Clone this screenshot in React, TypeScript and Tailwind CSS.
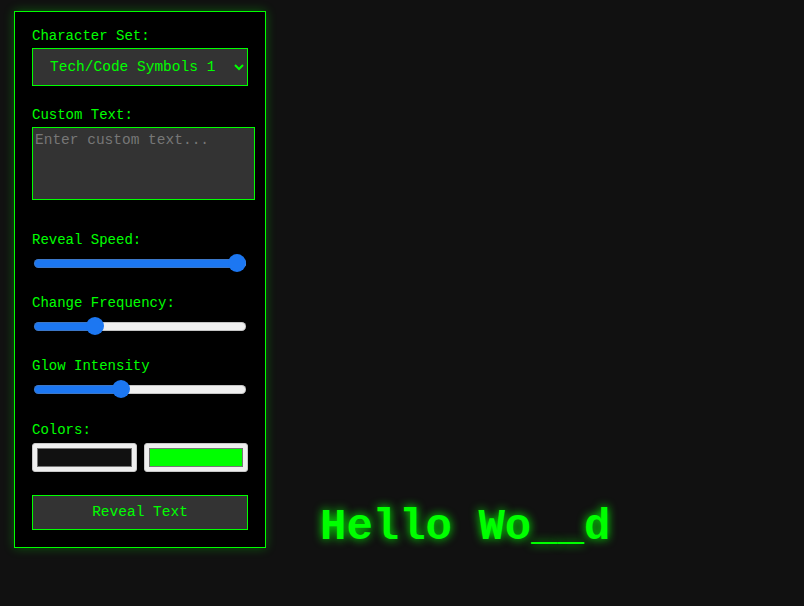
import { useState } from "react";
import type { CSSProperties } from "react";

const mono = "font-['Liberation_Mono','Courier_New',monospace]";

const Slider = ({ label, value, last }: { label: string; value: number; last?: boolean }) => {
  const [v, setV] = useState(value);
  // fill ends under the thumb centre
  const fill = { "--p": `calc(9px + (100% - 18px) * ${v / 100})` } as CSSProperties;
  return (
    <div className={last ? "mb-[23px]" : "mb-[22px]"}>
      <label className="mb-[5px] block text-[14px] leading-[16px] text-[#0f0]">{label}</label>
      <div className="px-[2px]">
        <input
          type="range"
          min={0}
          max={100}
          value={v}
          style={fill}
          onChange={(e) => setV(Number(e.target.value))}
          className="block h-[20px] w-full cursor-pointer appearance-none bg-transparent [&::-webkit-slider-runnable-track]:h-[9px] [&::-webkit-slider-runnable-track]:rounded-full [&::-webkit-slider-runnable-track]:bg-[linear-gradient(to_right,#1c77f2_var(--p),#efefef_var(--p))] [&::-webkit-slider-runnable-track]:shadow-[inset_0_0_0_1px_rgba(120,120,120,0.35)] [&::-webkit-slider-thumb]:mt-[-4.5px] [&::-webkit-slider-thumb]:h-[18px] [&::-webkit-slider-thumb]:w-[18px] [&::-webkit-slider-thumb]:appearance-none [&::-webkit-slider-thumb]:rounded-full [&::-webkit-slider-thumb]:bg-[#1c77f2]"
        />
      </div>
    </div>
  );
};

export default function App() {
  const [bg, setBg] = useState("#111111");
  const [fg, setFg] = useState("#00ff00");

  return (
    <div className={`${mono} flex min-h-[606px] items-end bg-[#111] pt-[11px] pl-[14px] pb-[57px]`}>
      <div className="w-[252px] self-start border border-[#0f0] bg-black px-[17px] pt-[16px] pb-[17px] shadow-[0_0_10px_rgba(0,255,0,0.3)]">
        {/* Character set */}
        <div className="mb-[21px]">
          <label className="mb-[4px] block text-[14px] leading-[16px] text-[#0f0]">Character Set:</label>
          <select className="block h-[38px] w-full border border-[#0f0] bg-[#333] pl-[13px] text-[14.5px] text-[#0f0]">
            <option>Tech/Code Symbols 1</option>
            <option>Matrix Katakana</option>
            <option>Binary</option>
          </select>
        </div>

        {/* Custom text */}
        <div className="mb-[32px]">
          <label className="mb-[4px] block text-[14px] leading-[16px] text-[#0f0]">Custom Text:</label>
          <textarea
            placeholder="Enter custom text..."
            className="block h-[73px] w-[223px] resize-none border border-[#0f0] bg-[#333] px-[2px] py-[2px] text-[14.5px] text-[#0f0] placeholder:text-[#777]"
          />
        </div>

        <Slider label="Reveal Speed:" value={100} />
        <Slider label="Change Frequency:" value={27} />
        <Slider label="Glow Intensity" value={40} last />

        {/* Colors */}
        <div className="mb-[23px]">
          <label className="mb-[5px] block text-[14px] leading-[16px] text-[#0f0]">Colors:</label>
          <div className="flex gap-[7px]">
            <input
              type="color"
              value={bg}
              onChange={(e) => setBg(e.target.value)}
              className="h-[29px] flex-1 rounded-[3px] border border-[#c8c8c8] bg-[#efefef] px-[2px] py-0"
            />
            <input
              type="color"
              value={fg}
              onChange={(e) => setFg(e.target.value)}
              className="h-[29px] flex-1 rounded-[3px] border border-[#c8c8c8] bg-[#efefef] px-[2px] py-0"
            />
          </div>
        </div>

        <button className="block h-[35px] w-full border border-[#0f0] bg-[#333] text-[14.5px] text-[#0f0]">
          Reveal Text
        </button>
      </div>

      <div className="ml-[54px] text-[44px] leading-none font-bold text-[#0f0] [text-shadow:0_0_10px_#0f0]">
        Hello Wo__d
      </div>
    </div>
  );
}
